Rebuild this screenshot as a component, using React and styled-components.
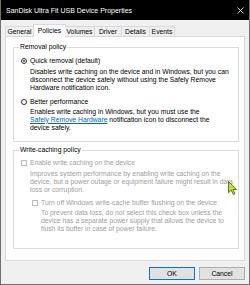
import React from "react";
import styled, { createGlobalStyle } from "styled-components";

const Global = createGlobalStyle`
  html, body { margin: 0; padding: 0; background: #f0f0f0; }
  body { font-family: "Liberation Sans", Arial, sans-serif; font-size: 6.8px; color: #000; }
  * { box-sizing: border-box; }
`;

const Window = styled.div`
  position: relative;
  width: 250px;
  height: 285px;
  background: #f0f0f0;
  border: 1px solid #6f6f6f;
  border-top: 0;
  display: flex;
  flex-direction: column;
  overflow: hidden;
`;

const TitleBar = styled.div`
  height: 20px;
  margin: 0 -1px;
  background: #000;
  color: #fff;
  display: flex;
  align-items: center;
  justify-content: space-between;
  padding: 0 6px 0 6px;
  font-size: 7px;
`;

const Body = styled.div`
  padding: 4px 4px 0 4px;
  display: flex;
  flex-direction: column;
`;

const TabStrip = styled.div`
  display: flex;
  align-items: flex-end;
  height: 12px;
  position: relative;
  z-index: 1;
`;

const Tab = styled.div`
  width: ${(p) => p.$w}px;
  height: ${(p) => (p.$active ? 13 : 10)}px;
  margin-bottom: ${(p) => (p.$active ? -1 : 0)}px;
  margin-left: ${(p) => (p.$active ? -1 : 0)}px;
  margin-right: ${(p) => (p.$active ? -1 : 0)}px;
  background: ${(p) => (p.$active ? "#fff" : "#f0f0f0")};
  border: 1px solid #d9d9d9;
  border-bottom: 0;
  border-left-width: ${(p) => (p.$first || p.$active ? 1 : 0)}px;
  display: flex;
  align-items: center;
  justify-content: center;
  line-height: 8px;
  padding-top: ${(p) => (p.$active ? 0 : 1)}px;
`;

const Panel = styled.div`
  height: 225px;
  background: #fff;
  border: 1px solid #d9d9d9;
  padding: 6px 5px 0 7px;
`;

const Group = styled.fieldset`
  margin: ${(p) => p.$mt || 0}px 0 0 0;
  padding: 0;
  min-width: 0;
  border: 1px solid #dcdcdc;
  height: ${(p) => p.$h}px;
`;

const Legend = styled.legend`
  margin-left: 5px;
  padding: 0 1px;
  line-height: 8px;
  font-size: 6.8px;
`;

const GroupInner = styled.div`
  padding: ${(p) => p.$pt}px 0 0 7px;
`;

const OptionRow = styled.div`
  display: flex;
  align-items: center;
  gap: 3px;
  height: 8px;
  line-height: 8px;
  margin-top: ${(p) => p.$mt || 0}px;
  margin-left: ${(p) => p.$indent || 0}px;
  color: ${(p) => (p.$disabled ? "#a0a0a0" : "#000")};
  white-space: nowrap;
`;

const Radio = styled.span`
  width: 6px;
  height: 6px;
  border-radius: 50%;
  border: 1px solid #333;
  background: #fff;
  display: flex;
  align-items: center;
  justify-content: center;
  flex: none;
  &::after {
    content: "";
    width: 2.5px;
    height: 2.5px;
    border-radius: 50%;
    background: ${(p) => (p.$checked ? "#333" : "transparent")};
  }
`;

const Check = styled.span`
  width: 6px;
  height: 6px;
  border: 1px solid #bcbcbc;
  background: #fff;
  flex: none;
`;

const Desc = styled.div`
  margin-top: ${(p) => p.$mt || 0}px;
  padding-left: ${(p) => p.$indent}px;
  line-height: 7.8px;
  white-space: nowrap;
  color: ${(p) => (p.$disabled ? "#a0a0a0" : "#000")};
`;

const Link = styled.span`
  color: #0066cc;
  text-decoration: underline;
`;

const ButtonRow = styled.div`
  display: flex;
  justify-content: flex-end;
  gap: 4px;
  padding: 6px 4px 0 0;
`;

const Button = styled.div`
  width: 46px;
  height: 13px;
  background: #e1e1e1;
  border: 1px solid ${(p) => (p.$default ? "#0078d7" : "#adadad")};
  display: flex;
  align-items: center;
  justify-content: center;
  line-height: 8px;
`;

const Cursor = styled.svg`
  position: absolute;
  left: 227px;
  top: 181px;
`;

export default function App() {
  const tabs = [
    ["General", 29],
    ["Policies", 33],
    ["Volumes", 30],
    ["Driver", 27],
    ["Details", 28],
    ["Events", 25],
  ];
  return (
    <>
      <Global />
      <Window>
        <TitleBar>
          <span>SanDisk Ultra Fit USB Device Properties</span>
          <svg width="7" height="7" viewBox="0 0 7 7">
            <path d="M0.5 0.5 L6.5 6.5 M6.5 0.5 L0.5 6.5" stroke="#fff" strokeWidth="0.8" />
          </svg>
        </TitleBar>
        <Body>
          <TabStrip>
            {tabs.map(([name, w], i) => (
              <Tab key={name} $w={w} $first={i === 0} $active={name === "Policies"}>
                {name}
              </Tab>
            ))}
          </TabStrip>
          <Panel>
            <Group $h={99}>
              <Legend>Removal policy</Legend>
              <GroupInner $pt={6}>
                <OptionRow>
                  <Radio $checked />
                  Quick removal (default)
                </OptionRow>
                <Desc $mt={3} $indent={9}>
                  Disables write caching on the device and in Windows, but you can
                  <br />
                  disconnect the device safely without using the Safely Remove
                  <br />
                  Hardware notification icon.
                </Desc>
                <OptionRow $mt={6.6}>
                  <Radio />
                  Better performance
                </OptionRow>
                <Desc $mt={2} $indent={9}>
                  Enables write caching in Windows, but you must use the
                  <br />
                  <Link>Safely Remove Hardware</Link> notification icon to disconnect the
                  <br />
                  device safely.
                </Desc>
              </GroupInner>
            </Group>
            <Group $mt={4} $h={103}>
              <Legend>Write-caching policy</Legend>
              <GroupInner $pt={5}>
                <OptionRow $disabled>
                  <Check />
                  Enable write caching on the device
                </OptionRow>
                <Desc $mt={3} $indent={9} $disabled>
                  Improves system performance by enabling write caching on the
                  <br />
                  device, but a power outage or equipment failure might result in data
                  <br />
                  loss or corruption.
                </Desc>
                <OptionRow $mt={5.6} $indent={11} $disabled>
                  <Check />
                  Turn off Windows write-cache buffer flushing on the device
                </OptionRow>
                <Desc $mt={2} $indent={20} $disabled>
                  To prevent data loss, do not select this check box unless the
                  <br />
                  device has a separate power supply that allows the device to
                  <br />
                  flush its buffer in case of power failure.
                </Desc>
              </GroupInner>
            </Group>
          </Panel>
        </Body>
        <ButtonRow>
          <Button $default>OK</Button>
          <Button>Cancel</Button>
        </ButtonRow>
        <Cursor width="9" height="14" viewBox="0 0 12 19">
          <path
            d="M0.5 0.5 L0.5 16 L4.2 12.4 L7 18.3 L9.4 17.2 L6.7 11.5 L11.5 11.5 Z"
            fill="#b4e61e"
            stroke="#3a4a10"
            strokeWidth="1"
            strokeLinejoin="round"
          />
        </Cursor>
      </Window>
    </>
  );
}
